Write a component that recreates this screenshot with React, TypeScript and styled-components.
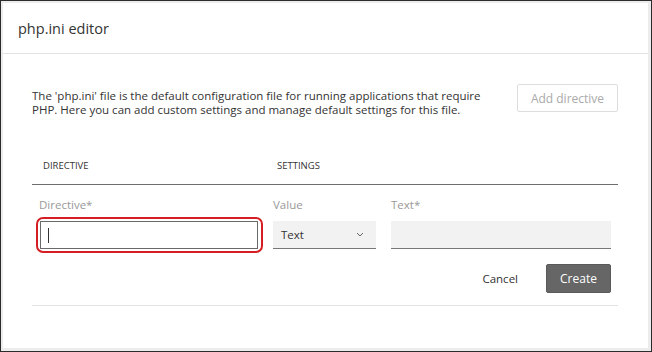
import styled, { createGlobalStyle } from 'styled-components'

const GlobalStyle = createGlobalStyle`
  html, body {
    margin: 0;
    padding: 0;
    background: #fff;
  }
  body {
    font-family: "Open Sans", "Noto Sans", Arial, sans-serif;
    color: #333;
  }
`;

const Frame = styled.div`
  width: 652px;
  height: 352px;
  box-sizing: border-box;
  border: 1px solid #2b2b2b;
  background: #ececec;
  padding: 2px 3px 3px 2px;
`;

const Dialog = styled.div`
  height: 100%;
  background: #fff;
  display: flex;
  flex-direction: column;
`;

const Header = styled.div`
  height: 50px;
  display: flex;
  align-items: center;
  padding: 0 15px;
  border-bottom: 1px solid #e3e3e3;
  font-size: 14.5px;
  color: #333;
`;

const Body = styled.div`
  padding: 30px 30px 0 29px;
  display: flex;
  flex-direction: column;
`;

const Intro = styled.div`
  display: flex;
  justify-content: space-between;
  align-items: flex-start;
  gap: 24px;
`;

const Description = styled.p`
  margin: 0;
  font-size: 11.5px;
  line-height: 14px;
  color: #333;
  max-width: 458px;
  padding-top: 5px;
`;

const GhostButton = styled.button`
  font-family: inherit;
  font-size: 12px;
  color: #aaa;
  background: #fff;
  border: 1px solid #ddd;
  border-radius: 2px;
  width: 101px;
  height: 28px;
  padding: 0;
  flex-shrink: 0;
`;

const TableHead = styled.div`
  display: grid;
  grid-template-columns: 234px 1fr;
  margin-top: 30px;
  height: 37px;
  align-items: center;
  border-bottom: 1px solid #6e6e6e;
`;

const HeadCell = styled.div`
  padding-left: 11px;
  font-size: 9.5px;
  color: #333;
  text-transform: uppercase;
`;

const FieldRow = styled.div`
  display: grid;
  grid-template-columns: 218px 103px 1fr;
  column-gap: 15px;
  padding: 0 7px 0 8px;
  margin-top: 11px;
`;

const Field = styled.div`
  display: flex;
  flex-direction: column;
`;

const Label = styled.label<{ $indent?: number }>`
  font-size: 11.5px;
  color: #999;
  height: 18px;
  line-height: 18px;
  margin-left: ${(p) => p.$indent ?? 0}px;
  margin-bottom: 7px;
`;

const FocusRing = styled.div`
  position: relative;
  height: 28px;
  &::after {
    content: '';
    position: absolute;
    inset: -4px -5px -4px -4px;
    border: 2px solid #d41e24;
    border-radius: 7px;
    pointer-events: none;
  }
`;

const TextInput = styled.div`
  box-sizing: border-box;
  height: 28px;
  border: 1px solid #6a6a6a;
  background: #fff;
  display: flex;
  align-items: center;
  padding-left: 7px;
`;

const Caret = styled.span`
  width: 1px;
  height: 15px;
  background: #333;
`;

const FilledBox = styled.div`
  box-sizing: border-box;
  height: 28px;
  background: #f2f2f2;
  border-bottom: 1px solid #777;
  display: flex;
  align-items: center;
  justify-content: space-between;
  padding: 0 12px 0 8px;
  font-size: 11.5px;
  color: #333;
`;

const Actions = styled.div`
  display: flex;
  justify-content: flex-end;
  align-items: center;
  gap: 28px;
  padding: 0 7px 12px 0;
  margin-top: 15px;
  border-bottom: 1px solid #e3e3e3;
`;

const TextButton = styled.button`
  font-family: inherit;
  font-size: 11.5px;
  color: #333;
  background: none;
  border: none;
  padding: 0;
`;

const PrimaryButton = styled.button`
  font-family: inherit;
  font-size: 12px;
  color: #fff;
  background: #666;
  border: 1px solid #5a5a5a;
  border-radius: 2px;
  width: 65px;
  height: 29px;
  padding: 0;
`;

const Chevron = () => (
  <svg width="8" height="5" viewBox="0 0 8 5" fill="none">
    <path d="M1 1l3 3 3-3" stroke="#666" strokeWidth="1" />
  </svg>
);

const App = () => {
  return (
    <>
      <GlobalStyle />
      <Frame>
        <Dialog>
          <Header>php.ini editor</Header>
          <Body>
            <Intro>
              <Description>
                The 'php.ini' file is the default configuration file for running applications that require
                PHP. Here you can add custom settings and manage default settings for this file.
              </Description>
              <GhostButton>Add directive</GhostButton>
            </Intro>
            <TableHead>
              <HeadCell>Directive</HeadCell>
              <HeadCell>Settings</HeadCell>
            </TableHead>
            <FieldRow>
              <Field>
                <Label $indent={-1}>Directive*</Label>
                <FocusRing>
                  <TextInput>
                    <Caret />
                  </TextInput>
                </FocusRing>
              </Field>
              <Field>
                <Label>Value</Label>
                <FilledBox>
                  Text
                  <Chevron />
                </FilledBox>
              </Field>
              <Field>
                <Label>Text*</Label>
                <FilledBox />
              </Field>
            </FieldRow>
            <Actions>
              <TextButton>Cancel</TextButton>
              <PrimaryButton>Create</PrimaryButton>
            </Actions>
          </Body>
        </Dialog>
      </Frame>
    </>
  );
};

export default App;
